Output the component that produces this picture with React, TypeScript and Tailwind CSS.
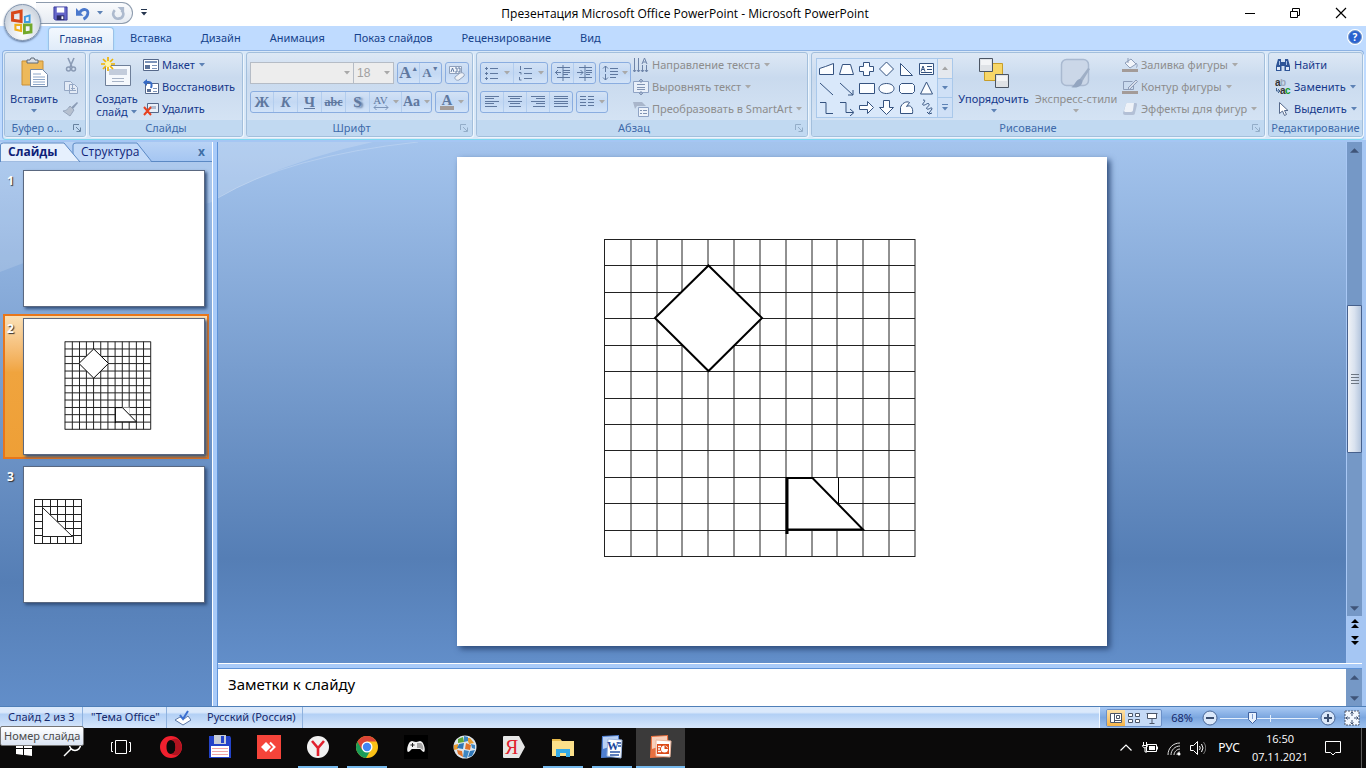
import type { ReactNode } from "react";
import { useState } from "react";

const tabs = ["Вставка", "Дизайн", "Анимация", "Показ слайдов", "Рецензирование", "Вид"];

const gridX = [147.5, 174, 200, 225, 251, 277, 303, 329, 355, 380, 406, 432, 458];
const gridY = [82.5, 108.5, 135.5, 161.5, 188.5, 214.5, 241.5, 267.5, 293.5, 320.5, 346.5, 373.5, 399.5];

function Caret({ className = "text-[#5d82b5]" }: { className?: string }) {
  return (
    <svg viewBox="0 0 6 4" className={`h-1 w-1.5 shrink-0 ${className}`} fill="currentColor" aria-hidden="true">
      <path d="M0 0h6L3 3.5z" />
    </svg>
  );
}

function Icon({ children, size = "h-4 w-4", box = "0 0 16 16" }: { children: ReactNode; size?: string; box?: string }) {
  return (
    <svg viewBox={box} className={`shrink-0 ${size}`} fill="none" aria-hidden="true">
      {children}
    </svg>
  );
}

function Group({ title, width, launcher, dim, children }: { title: string; width: string; launcher?: boolean; dim?: boolean; children: ReactNode }) {
  return (
    <section className={`flex flex-col overflow-hidden rounded-[3px] border border-[#a3bfdc] bg-linear-to-b from-[#dde8f5] from-0% via-[#c9daee] via-30% to-[#d8e6f6] shadow-[1px_1px_0_#eef6fd] ${width}`}>
      <div className="flex min-h-0 flex-1 pt-px">{children}</div>
      <div className="relative flex h-4 shrink-0 items-center justify-center bg-[#c1d9f1]">
        <h2 className="whitespace-nowrap text-[11px] leading-4 text-[#3e6aaa]">{title}</h2>
        {launcher ? (
          <button aria-label={`${title}: параметры`} className={`absolute right-1 top-1 ${dim ? "opacity-50" : ""}`}>
            <svg viewBox="0 0 8 8" className="h-2 w-2" fill="none" stroke="#66819f">
              <path d="M.5 6V.5H6M3 3l4 4M7.5 3.5v4h-4" />
            </svg>
          </button>
        ) : null}
      </div>
    </section>
  );
}

function RowButton({ icon, label, caret, dim }: { icon: ReactNode; label: string; caret?: boolean; dim?: boolean }) {
  return (
    <button disabled={dim} className={`flex h-[22px] items-center gap-[3px] whitespace-nowrap text-[11px] ${dim ? "text-[#8d8d8d]" : "text-[#15388b]"}`}>
      {icon}
      <span>{label}</span>
      {caret ? <span className="pl-px"><Caret className={dim ? "text-[#a9a9a9]" : "text-[#5d82b5]"} /></span> : null}
    </button>
  );
}

function Cells({ children }: { children: ReactNode }) {
  return <div className="flex h-[22px] divide-x divide-[#b3cdee] rounded-[3px] border border-[#8aade0] bg-linear-to-b from-[#d3e2f5] via-[#c3d8f3] to-[#d2e3f8]">{children}</div>;
}

function Cell({ label, width, caret, children }: { label: string; width: string; caret?: boolean; children: ReactNode }) {
  return (
    <button disabled aria-label={label} className={`flex items-center justify-center gap-1 font-['Liberation_Serif',serif] font-bold leading-5 text-[#5f789f] ${width}`}>
      {children}
      {caret ? <Caret className="text-[#a9a9a9]" /> : null}
    </button>
  );
}

function Lines({ d }: { d: string }) {
  return (
    <Icon>
      <path d={d} stroke="#5f789f" />
    </Icon>
  );
}

function SlideDrawing({ thin }: { thin?: boolean }) {
  const strong = thin ? 1 : 2;
  return (
    <svg viewBox="0 0 650 489" className="block h-full w-full" fill="none" stroke="#000" role="img" aria-label="Ромб и трапеция на клетчатой сетке">
      <g strokeWidth="1" stroke={thin ? "#222" : "#222"}>
        {gridX.map((x) => <path key={x} d={`M${x} 82V400`} vectorEffect="non-scaling-stroke" />)}
        {gridY.map((y) => <path key={y} d={`M147 ${y}H458`} vectorEffect="non-scaling-stroke" />)}
      </g>
      <path d="M251.5 108.5 305 161 251.5 214 198 161z" fill="#fff" strokeWidth={strong} vectorEffect="non-scaling-stroke" />
      <path d="M330 321h52v26l24 26h-76z" fill="#fff" stroke="none" />
      {thin ? null : <path d="M381.5 321v26" />}
      <path d="M330 321h25.500L406 372.500H330" strokeWidth={strong} vectorEffect="non-scaling-stroke" />
      <path d="M330 320v57" strokeWidth={thin ? 1 : 3} vectorEffect="non-scaling-stroke" />
    </svg>
  );
}

function TriangleDrawing() {
  return (
    <svg viewBox="0 0 180 135" className="block h-full w-full" fill="none" stroke="#222" role="img" aria-label="Треугольник на сетке">
      <path d="M10.500 32V77M18.500 32V77M26.500 32V77M33.500 32V77M41.500 32V77M49.500 32V77M57.500 32V77M10 32.500H58M10 39.500H58M10 47.500H58M10 54.500H58M10 61.500H58M10 68.500H58M10 76.500H58" />
      <path d="M18.500 40.500 48.500 69.500H18.500z" fill="#fff" />
    </svg>
  );
}

function TitleBar() {
  return (
    <header className="relative flex h-[26px] shrink-0 items-center justify-center bg-white">
      <button aria-label="Кнопка Office" className="absolute left-1 top-1 z-20 h-[37px] w-[37px] rounded-full border border-[#8294ad] bg-radial-[at_50%_75%] from-white via-[#e2e7ee] to-[#b4bfcd] shadow-[0_1px_2px_#5b7397]">
        <svg viewBox="0 0 37 37" className="h-full w-full" fill="none" aria-hidden="true">
          <path d="M8 8.500 17 6.500v11l-9-1.500z" stroke="#d8481a" strokeWidth="3.200" />
          <path d="M21 12.500 26 11v7h-5z" stroke="#3f9be0" strokeWidth="2" />
          <path d="M11 21h6v6.500L11 26z" stroke="#f0b01c" strokeWidth="2.200" />
          <path d="M20.500 21h7v7.500l-7 1z" stroke="#73a92c" strokeWidth="3" />
        </svg>
      </button>
      <div className="absolute left-9 top-0.5 flex h-[22px] w-[97px] items-center gap-2 rounded-r-full border border-l-0 border-[#8d9bad] bg-linear-to-b from-[#fafbfd] to-[#e6ebf2] pl-[17px]">
        <button aria-label="Сохранить">
          <Icon size="h-[15px] w-[15px]">
            <path d="M1 1h14v14H2.500L1 13.500z" fill="#6465c9" stroke="#3a3b9c" />
            <path d="M4 1.500h8V7H4z" fill="#fff" />
            <path d="M4 10h8v5H4z" fill="#2a2b63" />
            <path d="M9 11h2v3H9z" fill="#fff" />
          </Icon>
        </button>
        <button aria-label="Отменить" className="flex items-center gap-1.5">
          <Icon size="h-[15px] w-[15px]">
            <path d="M4 7C7 2 14 3 12.500 8.500 12 11 10 13 8 14" stroke="#4a78cc" strokeWidth="3" />
            <path d="M0 2v8.500h8z" fill="#4a78cc" />
          </Icon>
          <Caret />
        </button>
        <button aria-label="Повторить">
          <Icon size="h-[15px] w-[15px]">
            <path d="M4 4.500C0 9 4 14 8 13.500c5 0 7-6 3-9" stroke="#adbace" strokeWidth="2.800" />
            <path d="M7 1h7v7z" fill="#adbace" />
          </Icon>
        </button>
      </div>
      <button aria-label="Настройка панели быстрого доступа" className="absolute left-[141px] top-[9px]">
        <svg viewBox="0 0 6 7" className="h-[7px] w-1.5" fill="#26364f"><path d="M0 0h6v1H0zM0 3h6L3 6.500z" /></svg>
      </button>
      <h1 className="pl-1 pt-0.5 font-['Open_Sans',sans-serif] text-[12px]">Презентация Microsoft Office PowerPoint - Microsoft PowerPoint</h1>
      <div className="absolute right-px top-0 flex h-full items-center">
        <button aria-label="Свернуть" className="flex h-full w-[45px] items-center justify-center"><Icon size="h-3 w-3" box="0 0 12 12"><path d="M1 6.500h10" stroke="#000" /></Icon></button>
        <button aria-label="Восстановить окно" className="flex h-full w-[45px] items-center justify-center"><Icon size="h-3 w-3" box="0 0 12 12"><path d="M1.500 4.500h7v6h-7zM3.500 4V1.500h7v7H9" stroke="#000" /></Icon></button>
        <button aria-label="Закрыть" className="flex h-full w-12 items-center justify-center"><Icon size="h-3 w-3" box="0 0 12 12"><path d="m1 1 10 10M11 1 1 11" stroke="#000" strokeWidth="1.200" /></Icon></button>
      </div>
    </header>
  );
}

function TabRow() {
  return (
    <nav className="flex h-6 shrink-0 items-end bg-[#bfdbff] pl-12 text-[11px] text-[#15428b]">
      <button className="h-[23px] w-[66px] rounded-t-[4px] border border-b-0 border-[#9cc0e8] bg-linear-to-b from-[#f3f8fe] to-[#e0ecf9] shadow-[0_0_2px_#8fe4f8]">Главная</button>
      <div className="flex h-[23px] gap-[29px] pl-4">
        {tabs.map((tab) => <button key={tab}>{tab}</button>)}
      </div>
      <button aria-label="Справка" className="mb-1.5 ml-auto mr-1 flex h-[14px] w-[14px] items-center justify-center rounded-full border border-[#7c9cc9] bg-[#2a62cf] text-[10px] font-bold text-white ring-1 ring-white">?</button>
    </nav>
  );
}

function ClipboardGroup() {
  return (
    <Group title="Буфер о..." width="w-[82px] shrink-0 [&_h2]:pr-4" launcher>
      <button className="flex w-[58px] flex-col items-center pt-[3px] text-[11px] text-[#15388b]">
        <Icon size="h-8 w-8" box="0 0 32 32">
          <path d="M4 4h21v24H4z" fill="#edb95a" stroke="#c98f35" />
          <path d="M9 6V3h3l1-2h3l1 2h3v3z" fill="#dadfe6" stroke="#5f6a78" />
          <path d="M12.500 12.500h12l5 5v12h-17z" fill="#fff" stroke="#7388a6" />
          <path d="M15 17h8M15 20h12M15 22.500h12M15 25h12M15 27.500h12" stroke="#8ba5c8" />
        </Icon>
        <span className="pt-[3px] leading-[14px]">Вставить</span>
        <span className="pt-[3px]"><Caret /></span>
      </button>
      <div className="flex flex-col">
        <button disabled aria-label="Вырезать" className="flex h-[22px] items-center"><Icon><path d="m5 1 4 9M11 1 7 10" stroke="#8a9bb5" strokeWidth="1.600" /><circle cx="5.500" cy="12" r="2" stroke="#8a9bb5" strokeWidth="1.500" /><circle cx="10.500" cy="12" r="2" stroke="#8a9bb5" strokeWidth="1.500" /></Icon></button>
        <button disabled aria-label="Копировать" className="flex h-[22px] items-center"><Icon><path d="M1.500 2.500h6l2 2v7h-8zM6.500 5.500h5l3 3v6h-8z" fill="#e3ebf6" stroke="#94a7c4" /><path d="M8 9.500h4M8 11.500h5" stroke="#94a7c4" /></Icon></button>
        <button disabled aria-label="Формат по образцу" className="flex h-[22px] items-center"><Icon><path d="m14 1 1 1-5 6-2-1.500z" fill="#8a9bb5" /><path d="m7 5 4 4-4 6-7-5c3 0 5-2 7-5z" fill="#b6c0cf" stroke="#97a6bc" /></Icon></button>
      </div>
    </Group>
  );
}

function SlidesGroup() {
  return (
    <Group title="Слайды" width="w-[154px] shrink-0">
      <button className="flex w-[53px] flex-col items-center pt-[3px] text-[11px] leading-[13px] text-[#15388b]">
        <Icon size="h-8 w-8" box="0 0 32 32">
          <path d="M4.500 8.500h25v20h-25z" fill="#f5f8fc" stroke="#6e7f99" />
          <path d="M8 12h18v6H8z" fill="#c3ccdb" /><path d="M11 21.500h12M11 24.500h12" stroke="#a7b3c6" />
          <path d="M7 0v14M0 7h14M2 2l10 10M12 2 2 12" stroke="#f0b400" strokeWidth="1.700" />
          <circle cx="7" cy="7" r="3" fill="#fff6a8" />
        </Icon>
        <span className="pt-[3px]">Создать</span>
        <span className="flex items-center gap-[3px]">слайд <Caret /></span>
      </button>
      <div>
        <RowButton label="Макет" caret icon={<Icon><path d="M.5 2.500h15v11H.5z" fill="#fff" stroke="#55688a" /><path d="M2 4h12v2H2z" fill="#7c93b8" /><path d="M2 8h5v4H2z" fill="#5c7299" /><path d="M9 8.500h5M9 11.500h5" stroke="#7c93b8" /></Icon>} />
        <RowButton label="Восстановить" icon={<Icon><path d="M2.500 4.500h13v10h-13z" fill="#fff" stroke="#55688a" /><path d="M4 10h4v3H4z" fill="#5c7299" /><path d="M10 9.500h4M10 12.500h4" stroke="#7c93b8" /><path d="M1.500 3h4C9 3 9 6 8 9" stroke="#3569c4" strokeWidth="2" /><path d="M0 3.500 4 0v7z" fill="#3569c4" /></Icon>} />
        <RowButton label="Удалить" icon={<Icon><path d="M4.500 2.500h11v9h-11z" fill="#e9eff8" stroke="#55688a" /><path d="M7 5h6v3H7z" fill="#aebbd0" /><path d="m1 6 7 8M8 6l-7 8" stroke="#e8401f" strokeWidth="2" /></Icon>} />
      </div>
    </Group>
  );
}

function FontGroup() {
  return (
    <Group title="Шрифт" width="w-[227px] shrink-0 [&_h2]:pr-4" launcher dim>
      <div className="flex flex-col gap-[7px] pl-[3px] pt-2">
        <div className="flex items-center gap-[3px]">
          <div className="flex">
            <label className="relative flex items-center">
              <select disabled aria-label="Шрифт" className="h-[22px] w-[104px] appearance-none border border-[#b5bcc6] bg-[#ededed]" />
              <span className="absolute right-1"><Caret className="text-[#a9a9a9]" /></span>
            </label>
            <label className="relative flex items-center">
              <select disabled aria-label="Размер шрифта" className="h-[22px] w-10 appearance-none border border-l-0 border-[#b5bcc6] bg-[#ededed] pl-[3px] font-['Liberation_Sans',sans-serif] text-[12px] text-[#a0a0a0]"><option>18</option></select>
              <span className="absolute right-1"><Caret className="text-[#a9a9a9]" /></span>
            </label>
          </div>
          <Cells>
            <Cell label="Увеличить размер" width="w-[22px] text-[17px]">A<span className="-ml-1 -mt-2 text-[7px]">▲</span></Cell>
            <Cell label="Уменьшить размер" width="w-[21px] text-[13px]">A<span className="-ml-1 -mt-2 text-[7px]">▼</span></Cell>
          </Cells>
          <Cells>
            <Cell label="Очистить формат" width="w-[22px]">
              <Icon size="h-[18px] w-[18px]" box="0 0 18 18"><path d="M1.500 2.500h12v7h-12z" fill="#f1f5fb" stroke="#8fa0bb" /><path d="m3 8 1.500-4L6 8M7 4h2v4H7M10 4h2v4h-2" stroke="#5f789f" /><path d="m7 13 5-4c3-1 5 1 4 3l-5 4c-2 1-5-1-4-3z" fill="#eef1f6" stroke="#8fa0bb" /></Icon>
            </Cell>
          </Cells>
        </div>
        <div className="flex gap-[3px]">
          <Cells>
            <Cell label="Полужирный" width="w-[23px] text-[15px]">Ж</Cell>
            <Cell label="Курсив" width="w-6 text-[15px] italic">К</Cell>
            <Cell label="Подчеркнутый" width="w-6 text-[15px] underline">Ч</Cell>
            <Cell label="Зачеркнутый" width="w-6 text-[12px] line-through">abc</Cell>
            <Cell label="Тень" width="w-6 text-[15px] [text-shadow:2px_1px_2px_#5f789f]">S</Cell>
            <Cell label="Межзнаковый интервал" width="w-8" caret>
              <span className="flex flex-col items-center text-[11px] font-normal leading-[10px]">AV<svg viewBox="0 0 16 5" className="h-[5px] w-4" fill="none" stroke="#7d95ba"><path d="M1 2.500h14M3.500 0 1 2.500 3.500 5M12.500 0 15 2.500 12.500 5" /></svg></span>
            </Cell>
            <Cell label="Регистр" width="w-[29px] text-[14px]" caret>Aa</Cell>
          </Cells>
          <Cells>
            <Cell label="Цвет текста" width="w-8" caret><span className="border-b-4 border-[#a39b98] px-0.5 text-[15px] leading-3">A</span></Cell>
          </Cells>
        </div>
      </div>
    </Group>
  );
}

function ParagraphGroup() {
  return (
    <Group title="Абзац" width="w-[332px] shrink-0 [&_h2]:pr-4" launcher dim>
      <div className="flex flex-col gap-[7px] pl-[3px] pt-2">
        <div className="flex gap-[3px]">
          <Cells>
            <Cell label="Маркеры" width="w-[33px]" caret><Lines d="M6 3.500h8M6 8.500h8M6 13.500h8M1 3.500h3M1 8.500h3M1 13.500h3M2.500 2v3M2.500 7v3M2.500 12v3" /></Cell>
            <Cell label="Нумерация" width="w-[33px]" caret><Lines d="M6 3.500h8M6 8.500h8M6 13.500h8M2.500 1v4M1 7.500h2v2M1.500 12v3h2" /></Cell>
          </Cells>
          <Cells>
            <Cell label="Уменьшить отступ" width="w-[22px]"><Lines d="M2 2.500h13M8 5.500h7M8 7.500h7M8 9.500h5M2 12.500h13M8 0v16M0 7.500h6M3 5 .5 7.500 3 10" /></Cell>
            <Cell label="Увеличить отступ" width="w-[21px]"><Lines d="M2 2.500h13M9 5.500h6M9 7.500h6M9 9.500h4M2 12.500h13M8 0v16M0 7.500h6M3.500 5 6 7.500 3.500 10" /></Cell>
          </Cells>
          <Cells>
            <Cell label="Междустрочный интервал" width="w-[30px]" caret><Lines d="M8 3.500h8M8 6.500h8M8 9.500h8M8 12.500h6M3.500 1v6M3.500 9v6M1 3.500 3.500 1 6 3.500M1 12.500 3.500 15 6 12.500" /></Cell>
          </Cells>
        </div>
        <div className="flex gap-[3px]">
          <Cells>
            <Cell label="По левому краю" width="w-[23px]"><Lines d="M1 2.500h14M1 4.500h9M1 7.500h14M1 9.500h9M1 12.500h12" /></Cell>
            <Cell label="По центру" width="w-[23px]"><Lines d="M1 2.500h14M3 4.500h10M1 7.500h14M3 9.500h10M2 12.500h12" /></Cell>
            <Cell label="По правому краю" width="w-[23px]"><Lines d="M1 2.500h14M6 4.500h9M1 7.500h14M6 9.500h9M3 12.500h12" /></Cell>
            <Cell label="По ширине" width="w-[22px]"><Lines d="M1 2.500h14M1 4.500h14M1 7.500h14M1 9.500h14M1 12.500h14" /></Cell>
          </Cells>
          <Cells>
            <Cell label="Колонки" width="w-[30px]" caret><Lines d="M1 2.500h6M1 5.500h6M1 8.500h6M1 11.500h6M9 2.500h6M9 5.500h6M9 8.500h6M9 11.500h6" /></Cell>
          </Cells>
        </div>
      </div>
      <div className="pl-0.5">
        <RowButton dim caret label="Направление текста" icon={<Icon><path d="M1.500 1v14M5.500 1v14M9.500 8v7M13.500 8v7M0 13l1.500 2L3 13M4 13l1.500 2L7 13M8 13l1.500 2 1.500-2M12 13l1.500 2 1.500-2M9 7l2.500-6L14 7M10 5h3" stroke="#6e84a8" /></Icon>} />
        <RowButton dim caret label="Выровнять текст" icon={<Icon><path d="M.5 2.500h15v11H.5z" fill="#e8eff9" stroke="#8fa3c4" /><path d="M4 5.500h8M4 8.500h8M4 10.500h8M8 0v4M8 12v4M6 2l2-2 2 2M6 14l2 2 2-2" stroke="#8093b3" /></Icon>} />
        <RowButton dim caret label="Преобразовать в SmartArt" icon={<Icon><path d="M0 1h9l4 4H4L2 8z" fill="#a9b6cb" /><path d="M5.500 6.500h10v9h-10z" fill="#eef3fa" stroke="#8fa3c4" /><path d="M7 9.500h2M10 9.500h4M7 12.500h2M10 12.500h4" stroke="#8093b3" /></Icon>} />
      </div>
    </Group>
  );
}

const shapes = [
  "M1.500 14.500v-6l6-2 8-3v11z",
  "M1.500 14.500 4.500 4.500h8l3 10z",
  "M5.500 6.500v-4h6v4h4v5h-4v4h-6v-4h-4v-5z",
  "m8.500 2 7 7-7 7-7-7z",
  "M2.500 3.500v12h12z",
  "M1.500 3.500h14v11h-14z",
  "m2 4 13 12",
  "m2 4 13 12M15 11v5h-5",
  "M1.500 4.500h15v10h-15z",
  "M8.500 4.500c10 0 10 10 0 10s-10-10 0-10z",
  "M3.500 4.500h11l2 2v6l-2 2h-11l-2-2v-6z",
  "m8.500 3 6 12h-12z",
  "M2 4.500h6v11h7",
  "M2 4.500h6v10h7M12 11l4 3.500-4 3.500",
  "M1.500 7.500h8v-4l6 6-6 6v-4h-8z",
  "M5.500 2.500h6v7h4l-7 7-7-7h4z",
  "M2.500 15.500v-6c1-4 6-7 9-5l-3 4c4-2 7 1 6 7z",
  "M5 2c5 0-2 4 0 5s5-3 6-1-4 4-2 5 5-3 5 0l-3 4M9 14l2 2 3-1",
];

function DrawingGroup() {
  return (
    <Group title="Рисование" width="min-w-[454px] flex-1 [&_h2]:pr-5" launcher dim>
      <div className="mb-1 ml-1 mt-1 flex h-[60px] shrink-0 border border-[#a9c8ea] bg-[#d9e8fa]">
        <div className="grid grid-cols-6">
          {shapes.map((d, index) => (
            <button key={d} aria-label={`Фигура ${index + 1}`} className="flex h-[19px] w-5 items-center justify-center">
              <svg viewBox="0 0 18 18" className="h-[18px] w-[18px]" fill={[6, 7, 12, 13, 17].includes(index) ? "none" : "#fbfdff"} stroke="#34527f">
                <path d={d} />
                {index === 5 ? <path d="M3 11.500 5 6l2 5.500M4 9.500h2M9 6.500h5M9 9.500h5M3 12.500h11" /> : null}
              </svg>
            </button>
          ))}
        </div>
        <div className="flex w-[15px] flex-col divide-y divide-[#a9c8ea] border-l border-[#a9c8ea] bg-[#cfe0f6]">
          <button aria-label="Вверх" className="flex flex-1 items-center justify-center bg-[#e4e8ee]"><span className="rotate-180"><Caret className="text-[#a5a5a5]" /></span></button>
          <button aria-label="Вниз" className="flex flex-1 items-center justify-center"><Caret /></button>
          <button aria-label="Все фигуры" className="flex flex-1 flex-col items-center justify-center gap-0.5"><span className="h-px w-1.5 bg-[#5d82b5]" /><Caret /></button>
        </div>
      </div>
      <button className="flex w-[81px] shrink-0 flex-col items-center pt-[3px] text-[11px] text-[#15388b]">
        <Icon size="h-8 w-8" box="0 0 32 32">
          <path d="M6.500 6.500h18v17h-18z" fill="#f7d667" stroke="#c79d29" />
          <path d="M1.500 1.500h13v13h-13zM17.500 17.500h13v13h-13z" fill="#dfe2e6" stroke="#4b5563" />
          <path d="M3 3h10v5H3zM19 19h10v5H19z" fill="#f3f4f6" />
        </Icon>
        <span className="pt-[3px] leading-[14px]">Упорядочить</span>
        <span className="pt-[3px]"><Caret /></span>
      </button>
      <button disabled className="flex w-[84px] shrink-0 flex-col items-center pt-[3px] text-[11px] text-[#8d8d8d]">
        <Icon size="h-8 w-8" box="0 0 32 32">
          <rect x="1.500" y="2.500" width="27" height="26" rx="5" fill="#cbd7e8" stroke="#a9b9d0" strokeWidth="1.500" />
          <path d="m30 12-8 13-3-2 9-12z" fill="#9fafc6" />
          <path d="M20 22c3 1 3 3 1 6-3 3-7 3-10 2 4-1 4-7 9-8z" fill="#93a5c0" />
        </Icon>
        <span className="whitespace-nowrap pt-[3px] leading-[14px]">Экспресс-стили</span>
        <span className="pt-[3px]"><Caret className="text-[#a9a9a9]" /></span>
      </button>
      <div className="pl-1">
        <RowButton dim caret label="Заливка фигуры" icon={<Icon><path d="m3 6 6-4 5 5-6 4z" fill="#f2f5fa" stroke="#8d9db8" /><path d="M14 6c2 2 1 5 0 4M6 1v5" stroke="#8d9db8" /><path d="M0 12h16v3H0z" fill="#a39b98" /></Icon>} />
        <RowButton dim caret label="Контур фигуры" icon={<Icon><path d="M1.500 2.500h9M1.500 2.500v8h10v-4" stroke="#8d9db8" /><path d="m6 9 8-8 1.500 1.500-8 8z" fill="#d7deea" stroke="#8d9db8" /><path d="M0 12h16v3H0z" fill="#a39b98" /></Icon>} />
        <RowButton dim caret label="Эффекты для фигур" icon={<Icon><path d="m1 12 3-9c0-1 1-1 2-1h8c1 0 1 1 1 2l-2 8c0 1-1 2-2 2H3c-1 0-2-1-2-2z" fill="#b3c0d6" /><path d="m2 10 2-7c0-1 1-1 2-1h6l-1 7c0 1-1 2-2 2H3z" fill="#eef2f8" /></Icon>} />
      </div>
    </Group>
  );
}

function EditingGroup() {
  return (
    <Group title="Редактирование" width="w-[95px] shrink-0">
      <div className="pl-1.5">
        <RowButton label="Найти" icon={<Icon><path d="M3 2h3v3h4V2h3l2 7v5H9.500V9h-3v5H1V9z" fill="#2f5597" /><path d="M2 10h3v3H2zM11 10h3v3h-3z" fill="#dfe9f8" /><path d="M4.500 4v4M11.500 4v4" stroke="#a9c1e6" /></Icon>} />
        <RowButton label="Заменить" caret icon={<svg viewBox="0 0 16 16" className="h-4 w-4 shrink-0 font-['Liberation_Sans',sans-serif] text-[10px] font-bold" aria-hidden="true"><text x="0" y="7" fill="#333">a</text><text x="5" y="7" fill="#9aa7ba">b</text><text x="5" y="15" fill="#333">a</text><text x="10" y="15" fill="#159a28">c</text><path d="M1.500 9v3h3M3 10l2 2-2 2" fill="none" stroke="#3f618f" /></svg>} />
        <RowButton label="Выделить" caret icon={<Icon><path d="M4.500 1.500v11l3-2.500 2 4.500 2-1-2-4h3.500z" fill="#fff" stroke="#55688a" /></Icon>} />
      </div>
    </Group>
  );
}

function Thumb({ index, selected, onSelect, children }: { index: number; selected: boolean; onSelect: () => void; children?: ReactNode }) {
  return (
    <button
      onClick={onSelect}
      className={`relative flex w-full border-2 p-0.5 pl-0 ${selected ? "border-[#e8761a] bg-linear-to-b from-[#fbe0b5] via-[#f0a43e] via-40% to-[#ee9f36]" : "border-transparent"}`}
    >
      <span className="w-[18px] shrink-0 pl-0.5 pt-[3px] text-left text-[12px] font-bold leading-4 text-white [text-shadow:1px_1px_1px_#333]">{index}</span>
      <span className="block aspect-[182/137] min-w-0 flex-1 border border-[#5a6880] bg-white shadow-[2px_2px_3px_#33507c]">{children}</span>
    </button>
  );
}

function SlidesPane() {
  const [current, setCurrent] = useState(2);
  return (
    <aside className="relative flex w-[212px] shrink-0 flex-col overflow-hidden bg-linear-to-b from-[#a4c4ed] via-[#557eb5] via-78% to-[#628ec9]">
      <svg viewBox="0 0 212 140" className="absolute left-0 top-0 w-full" aria-hidden="true"><path d="M0 0h212v60Q90 95 0 130z" fill="#fff" opacity=".14" /></svg>
      <div className="relative flex h-5 shrink-0 border-b border-[#5b89c4] bg-linear-to-b from-[#b9d3f5] to-[#a5c6f2] font-['Open_Sans',sans-serif] text-[12px] leading-5 text-[#0f1f78]">
        <svg viewBox="0 0 154 20" className="absolute left-0 top-0 h-5 w-[154px]" aria-hidden="true">
          <path d="M73 20V3q0-2 3-2h61l15 19z" fill="#c3daf8" stroke="#5b89c4" />
          <path d="M.5 20V3q0-2 3-2H64l16 19z" fill="#e6f0fd" stroke="#5b89c4" />
        </svg>
        <button className="relative w-[73px] pl-2 text-left font-bold">Слайды</button>
        <button className="relative w-20 pl-2 text-left">Структура</button>
        <button aria-label="Закрыть область" className="ml-auto mr-[7px] font-bold leading-[18px] text-[#3f6ea5]">x</button>
      </div>
      <div className="relative flex flex-1 flex-col gap-[3px] px-[3px] pt-1">
        <Thumb index={1} selected={current === 1} onSelect={() => setCurrent(1)} />
        <Thumb index={2} selected={current === 2} onSelect={() => setCurrent(2)}><SlideDrawing thin /></Thumb>
        <Thumb index={3} selected={current === 3} onSelect={() => setCurrent(3)}><TriangleDrawing /></Thumb>
      </div>
    </aside>
  );
}

function ScrollArrow({ up }: { up?: boolean }) {
  return (
    <button aria-label={up ? "Прокрутить вверх" : "Прокрутить вниз"} className="flex h-4 w-full shrink-0 items-center justify-center">
      <svg viewBox="0 0 10 5" className={`h-[5px] w-[9px] ${up ? "rotate-180" : ""}`} fill="#3f5478"><path d="M0 0h10L5 5z" /></svg>
    </button>
  );
}

function DoubleArrow({ down }: { down?: boolean }) {
  return (
    <button aria-label={down ? "Следующий слайд" : "Предыдущий слайд"} className="flex h-4 w-full items-center justify-center">
      <svg viewBox="0 0 8 10" className={`h-[10px] w-2 ${down ? "rotate-180" : ""}`} fill="#000"><path d="m4 0 4 4H0zM4 5l4 4H0z" /></svg>
    </button>
  );
}

function Workspace() {
  return (
    <div className="flex min-w-0 flex-1 flex-col">
      <div className="flex min-h-0 flex-1">
        <main className="relative flex min-w-0 flex-1 justify-center bg-linear-to-b from-[#a4c4ed] from-0% via-[#557eb5] via-80% to-[#628ec9] pb-[17px] pt-[15px]">
          <svg viewBox="0 0 240 56" className="absolute left-0 top-0 h-14 w-60" aria-hidden="true"><path d="M0 0h155Q70 18 0 56z" fill="#fff" opacity=".18" /><path d="M0 56Q70 14 200 0" fill="none" stroke="#fff" opacity=".2" /></svg>
          <div className="relative aspect-[650/489] h-full bg-white shadow-[3px_3px_6px_#2d4a78]"><SlideDrawing /></div>
        </main>
        <div className="flex w-4 shrink-0 flex-col border-l border-[#a9c8f5] bg-[#7598c6]">
          <ScrollArrow up />
          <div className="flex-[148]" />
          <div className="flex flex-[146] flex-col items-center justify-center gap-0.5 rounded-[1px] border border-[#46608c] bg-linear-to-r from-[#f0f2f6] via-[#d9e2ef] to-[#b4c5dd]">
            {[0, 1, 2, 3].map((line) => <span key={line} className="h-px w-2 bg-[#6c7683]" />)}
          </div>
          <div className="flex-[148]" />
          <ScrollArrow />
          <div className="bg-[#a5c6f3] pb-[15px]">
            <DoubleArrow />
            <DoubleArrow down />
          </div>
        </div>
      </div>
      <div className="h-1.5 shrink-0 border-b border-t border-t-white border-b-[#5f93d8] bg-[#a9cbf9]" />
      <div className="flex h-[37px] shrink-0 bg-white">
        <textarea aria-label="Заметки к слайду" defaultValue="Заметки к слайду" className="min-w-0 flex-1 resize-none overflow-hidden px-2.5 pt-[3px] text-[15px] leading-6 text-black outline-none" />
        <div className="flex w-4 flex-col justify-between bg-[#7598c6]"><ScrollArrow up /><ScrollArrow /></div>
      </div>
    </div>
  );
}

function StatusBar() {
  const [zoom, setZoom] = useState(68);
  return (
    <footer className="flex h-[22px] shrink-0 border-t border-[#4f7fb8] bg-linear-to-b from-[#dbe9fb] from-25% via-[#b3d0f5] via-35% to-[#d6e6fb] text-[11px] leading-5 text-[#15286b]">
      <span className="w-[83px] border-r border-[#8fb2de] pl-2">Слайд 2 из 3</span>
      <span className="w-[84px] border-r border-[#8fb2de] pl-2">"Тема Office"</span>
      <span className="flex w-[136px] gap-4 border-r border-[#8fb2de] pl-2">
        <span className="flex items-center"><Icon><path d="m0 10 5-3 4 2 4-3 3 4-8 5z" fill="#fff" stroke="#5b77a6" /><path d="m5 5 3 4 5-8" stroke="#3b6fd0" strokeWidth="2" /></Icon></span>
        Русский (Россия)
      </span>
      <div className="ml-auto flex items-center border-l border-[#f0f7ff] bg-linear-to-b from-[#a8c9f4] via-[#7ba6df] to-[#9fc2ef] pl-1.5 pr-1.5">
        <div className="flex h-[18px] overflow-hidden rounded-[2px] border border-[#6b90c8] bg-[#c5daf6]">
          <button aria-label="Обычный" className="flex w-[18px] items-center justify-center bg-linear-to-b from-[#fde2a8] to-[#f6b445]"><Icon size="h-3 w-3" box="0 0 12 12"><path d="M.5 1.500h11v9H.5zM4.500 1.500v9M6.500 3.500h3v3h-3zM5 8.500h6" fill="#fff" stroke="#4a5568" /></Icon></button>
          <button aria-label="Сортировщик слайдов" className="flex w-[18px] items-center justify-center"><Icon size="h-3 w-3" box="0 0 12 12"><path d="M.5 1.500h4v3h-4zM7.500 1.500h4v3h-4zM.5 7.500h4v3h-4zM7.500 7.500h4v3h-4z" fill="#fff" stroke="#4a5568" /></Icon></button>
          <button aria-label="Показ слайдов" className="flex w-[18px] items-center justify-center"><Icon size="h-3 w-3" box="0 0 12 12"><path d="M.5 1.500h11M1.500 2v4.500h9V2M6 7v4M3.500 11.500h5" fill="#fff" stroke="#4a5568" /></Icon></button>
        </div>
        <button className="w-10 text-center">{zoom}%</button>
        <button aria-label="Уменьшить масштаб" onClick={() => setZoom(zoom - 1)}><Icon><circle cx="8" cy="8" r="7" fill="#dbe8fa" stroke="#4a6898" /><path d="M4 8h8" stroke="#3c4f70" strokeWidth="2" /></Icon></button>
        <label className="relative mx-0.5 flex h-4 w-[98px]">
          <svg viewBox="0 0 98 16" className="h-4 w-full" fill="none" aria-hidden="true">
            <path d="M0 8.500h98M50.500 5v7" stroke="#e4effd" />
            <path d="M28.500 2.500h8v7l-4 4-4-4z" fill="#e8f1fd" stroke="#3f62a0" />
            <path d="M32.500 4v5" stroke="#7f9dcf" />
          </svg>
          <input type="range" min="10" max="400" aria-label="Масштаб" value={zoom} onChange={(event) => setZoom(Number(event.target.value))} className="absolute inset-0 w-full opacity-0" />
        </label>
        <button aria-label="Увеличить масштаб" onClick={() => setZoom(zoom + 1)}><Icon><circle cx="8" cy="8" r="7" fill="#dbe8fa" stroke="#4a6898" /><path d="M4 8h8M8 4v8" stroke="#3c4f70" strokeWidth="2" /></Icon></button>
        <button aria-label="Вписать слайд" className="ml-2"><Icon><path d="M1 1h14v14H1z" fill="#f2f7fe" stroke="#4a5568" strokeDasharray="2 1" /><path d="M8 2v4M8 10v4M2 8h4M10 8h4M6.500 3.500 8 2l1.500 1.500M6.500 12.500 8 14l1.500-1.500M3.500 6.500 2 8l1.500 1.500M12.500 6.500 14 8l-1.500 1.500" stroke="#3c4f70" /></Icon></button>
      </div>
    </footer>
  );
}

const big = "h-6 w-6";
const box = "0 0 24 24";

const apps = [
  { name: "Поиск", icon: <Icon size={big} box={box}><circle cx="14" cy="10" r="5.500" stroke="#fff" strokeWidth="1.500" /><path d="m10 14-7 7" stroke="#fff" strokeWidth="1.500" /></Icon> },
  { name: "Представление задач", icon: <Icon size={big} box={box}><path d="M5.500 5.500h11v13h-11zM3 7.500H1.500v9H3M19 7.500h1.500v9H19" stroke="#fff" /></Icon> },
  { name: "Opera", icon: <Icon size={big} box={box}><path d="M12 1a11 11 0 1 0 0 22 11 11 0 1 0 0-22zm0 4c3 0 4.500 3 4.500 7s-1.500 7-4.500 7-4.500-3-4.500-7S9 5 12 5z" fill="#f0202e" fillRule="evenodd" /><path d="M12 5c6-3 9-1 11 7-1 8-5 10-11 7 3 0 4.500-3 4.500-7S15 5 12 5z" fill="#b01420" /></Icon> },
  { name: "Total Commander", icon: <Icon size={big} box={box}><path d="M1 1h21l1 2v20H1z" fill="#2443c9" /><path d="M6 0h12v9H6z" fill="#c7ccd6" /><path d="M13 1h3v7h-3z" fill="#2443c9" /><path d="M3 11h18v11H3z" fill="#fff" /><path d="M4 13.500h16M4 16.500h16M4 19.500h16" stroke="#f0a5a5" /></Icon> },
  { name: "AnyDesk", icon: <Icon size={big} box={box}><path d="M0 0h24v24H0z" fill="#f5443a" /><path d="m9 7 5 5-5 5-5-5z" fill="#fff" /><path d="m13 7.500 4.500 4.500-4.500 4.500" stroke="#fff" strokeWidth="2" /></Icon> },
  { name: "Яндекс Браузер", open: true, icon: <Icon size={big} box={box}><circle cx="12" cy="12" r="11" fill="#f1f1f1" /><path d="m6 6 6 7 6-7M12 13v8" stroke="#e1202d" strokeWidth="2.600" /></Icon> },
  { name: "Chrome", open: true, icon: <Icon size={big} box={box}><circle cx="12" cy="12" r="11" fill="#fbc116" /><path d="M2.500 6.500A11 11 0 0 0 11 23l5-8.500H8z" fill="#1a9c58" /><path d="M2.500 6.500A11 11 0 0 1 21.500 6.500H12L7 15z" fill="#db4437" /><circle cx="12" cy="12" r="5.500" fill="#fff" /><circle cx="12" cy="12" r="4.200" fill="#4285f4" /></Icon> },
  { name: "Игры", icon: <Icon size={big} box={box}><path d="M0 0h24v24H0z" fill="#000" /><path d="M8 6c1 0 2 1 4 1s3-1 4-1c4 0 6 10 4 11-2 0-3-3-4-3H8c-1 0-2 3-4 3-2-1 0-11 4-11z" fill="#f2f2f2" /><path d="M8.500 8v4M6.500 10h4" stroke="#222" /><path d="M13 8h4c2 1 3 6 2 7l-3-2h-3z" fill="#a6a6a6" /></Icon> },
  { name: "Глобус", icon: <Icon size={big} box={box}><circle cx="12" cy="12" r="11.500" fill="#dfe7ee" /><path d="m5 4 5-2 1 5-6 1z" fill="#5ea83a" /><path d="m17 3 4 5-5 1-2-6zM1 10l4-1v5l-4 1z" fill="#e89b2e" /><path d="m13 8 5 2-1 5-5-1zM4 15l5 1 1 6-5-3z" fill="#e1742c" /><path d="m6 9 5-1-1 6-6-1zM17 16l5-1-3 6-4 1z" fill="#2f77b8" /><path d="m11 15 5 1-2 7-4-1zM18 9l4 1v4l-3-1zM11 1l4 1v4l-4 1z" fill="#3d86c2" /></Icon> },
  { name: "Яндекс", icon: <Icon size={big} box={box}><path d="M2 1h15l6 11-6 11H2q-1 0-1-1V2q0-1 1-1z" fill="#e6e6e6" /><text x="3" y="19" fill="#e1202d" fontFamily="Liberation Serif, serif" fontSize="20">Я</text></Icon> },
  { name: "Проводник", open: true, icon: <Icon size={big} box={box}><path d="M1 4h8l2 2h12v15H1z" fill="#fbe08a" /><path d="M1 4h8l1 2H1z" fill="#e6b94a" /><path d="M5 14h14v8h-4v-4H9v4H5z" fill="#35aae6" /></Icon> },
  { name: "Word", open: true, icon: <Icon size={big} box={box}><path d="m2 1 17-1 1 22-19 1z" fill="#4f7fd1" /><path d="m3 2 15-1v8L3 14z" fill="#b8d0f5" /><path d="m8 4 14 1-1 18-14-2z" fill="#fff" stroke="#9db6de" /><path d="M18 8h3M18 11h3M10 17h10M10 20h9" stroke="#2a54a5" strokeWidth="1.500" /><text x="7" y="15" fill="#21479b" fontFamily="Liberation Serif, serif" fontSize="12" fontWeight="bold">W</text></Icon> },
  { name: "PowerPoint", open: true, active: true, icon: <Icon size={big} box={box}><path d="m2 1 17-1 1 22-19 1z" fill="#e9703f" /><path d="m3 2 15-1v8L3 14z" fill="#f8cfba" /><path d="m7 5 15 1-1 16-14-1z" fill="#fff" stroke="#eab49b" /><path d="M8 9h12v10H8z" fill="#db4a18" /><circle cx="15.500" cy="14" r="3.500" fill="#fff" /><path d="M15.500 14V10l4 4z" fill="#db4a18" /><path d="M9 11.500h3M9 14h2M9 16.500h3" stroke="#fff" strokeWidth="1.500" /></Icon> },
];

function Taskbar() {
  return (
    <div className="relative flex h-10 shrink-0 bg-[#0b0a0a] text-[12px] text-white">
      <div role="tooltip" className="absolute -top-0.5 left-0 z-10 whitespace-nowrap rounded-[2px] border border-[#767676] bg-linear-to-b from-white to-[#dbe4f3] px-[3px] text-[11px] leading-[18px] text-[#4c4c4c]">Номер слайда</div>
      <button aria-label="Пуск" className="flex w-12 items-center justify-center"><Icon><path d="m0 2 7-1v7H0zM8 1l8-1v8H8zM0 9h7v6l-7-1zM8 9h8v7l-8-1z" fill="#fff" /></Icon></button>
      {apps.map((app) => (
        <button key={app.name} aria-label={app.name} className={`flex w-[49px] flex-col items-center ${app.active ? "bg-[#3b3a3a]" : ""}`}>
          <span className="flex h-[38px] items-center">{app.icon}</span>
          {app.open ? <span className={`h-0.5 bg-[#76b9ed] ${app.active ? "w-full" : "w-10"}`} /> : null}
        </button>
      ))}
      <div className="ml-auto flex items-center">
        <button aria-label="Скрытые значки" className="mr-2"><Icon><path d="m2.500 10.500 5.500-5.500 5.500 5.500" stroke="#fff" strokeWidth="1.200" /></Icon></button>
        <button aria-label="Батарея" className="mr-2"><Icon><path d="M4.500 4.500h10v7h-10zM15.500 6.500v3M1.500 2v3M4.500 2v3M.5 5.500h5c0 3-5 3-5 0M3 8v4h2" stroke="#fff" /><path d="M7 6h6v4H7z" fill="#fff" /></Icon></button>
        <button aria-label="Сеть" className="mr-2"><Icon><path d="M2 15C2 8 7 3 14 3M5 15c0-5 4-9 9-9M8 15c0-3 3-6 6-6M11 15c0-2 1-3 3-3" stroke="#ddd" /><circle cx="13" cy="14" r="1.500" fill="#fff" /></Icon></button>
        <button aria-label="Громкость" className="mr-3"><Icon><path d="M.5 5.500h3l4-4v13l-4-4h-3zM9.500 6q1.500 2 0 4M11.500 4q3 4 0 8" stroke="#fff" /><path d="M13.500 2q4.500 6 0 12" stroke="#777" /></Icon></button>
        <button className="mr-3">РУС</button>
        <button className="mr-[17px] flex flex-col items-center font-['Open_Sans',sans-serif] text-[11px] leading-[18px]"><span>16:50</span><span>07.11.2021</span></button>
        <button aria-label="Уведомления" className="mr-5"><Icon><path d="M.5 1.500h15v11h-5l-2.500 2.500-2.500-2.500h-5z" stroke="#fff" /></Icon></button>
        <span className="mr-1 h-10 w-px bg-[#5a5a5a]" />
      </div>
    </div>
  );
}

export default function App() {
  return (
    <div className="flex h-screen min-h-[640px] flex-col overflow-hidden bg-[#bfdbff] font-['Noto_Sans',sans-serif]">
      <TitleBar />
      <TabRow />
      <div className="mx-0.5 flex h-[90px] shrink-0 gap-[3px] rounded-[4px] border border-[#8db2e3] border-b-[#7ed9f0] bg-[#d9e8f8] p-px pb-0.5">
        <ClipboardGroup />
        <SlidesGroup />
        <FontGroup />
        <ParagraphGroup />
        <DrawingGroup />
        <EditingGroup />
      </div>
      <div className="flex min-h-0 flex-1 bg-[#a5c6f3] pr-1 pt-0.5">
        <SlidesPane />
        <div className="w-1.5 shrink-0 border-l border-r border-l-white border-r-[#5f93d8] bg-[#a9cbf9]" />
        <Workspace />
      </div>
      <StatusBar />
      <Taskbar />
    </div>
  );
}
